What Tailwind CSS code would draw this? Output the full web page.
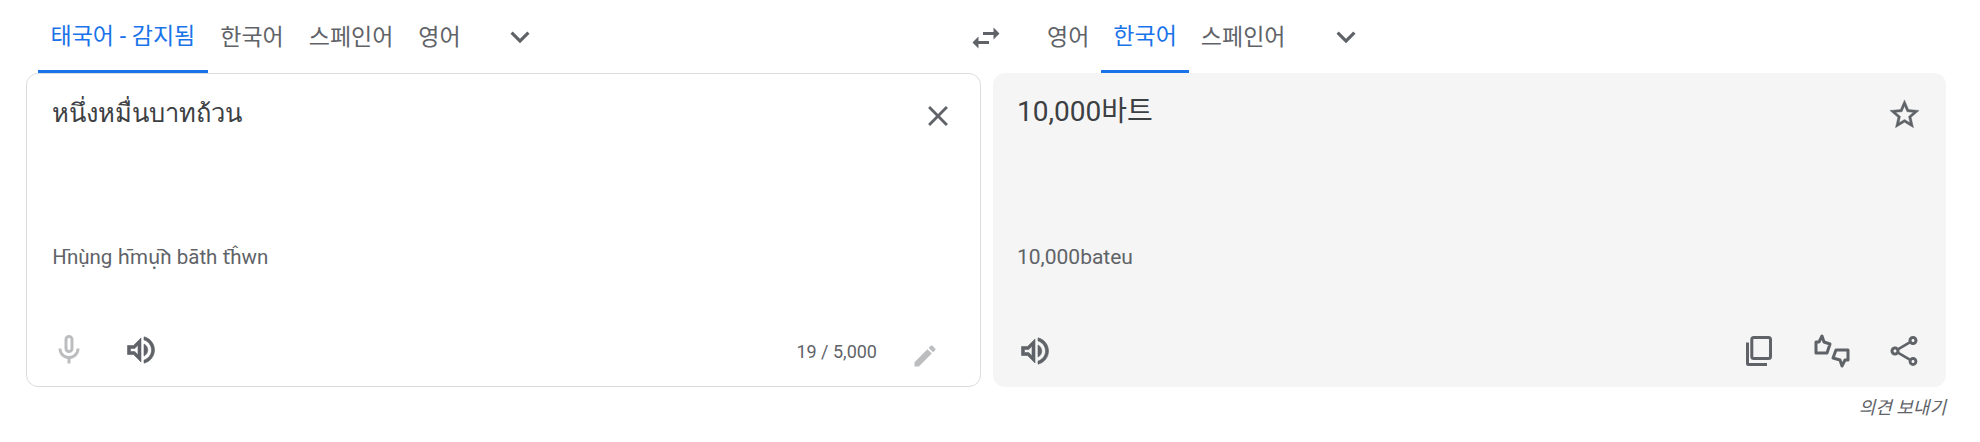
<!DOCTYPE html>
<html lang="ko"><head><meta charset="utf-8">
<script src="https://cdn.jsdelivr.net/npm/@tailwindcss/browser@4"></script></head>
<body class="bg-white w-[1980px] h-[442px] overflow-hidden font-['Roboto','Noto_Sans_CJK_KR','Noto_Sans',sans-serif] text-[#5f6368]">
<div class="flex h-[73px] pl-[38px] text-[23px] leading-[28px]">
  <div class="flex w-[926px] items-stretch">
    <div class="px-[12.5px] border-b-[3px] border-[#1a73e8] text-[#1a73e8] flex items-center whitespace-nowrap pt-[3px]">태국어 - 감지됨</div>
    <div class="px-[12.5px] flex items-center pt-[3px]">한국어</div>
    <div class="px-[12.5px] flex items-center pt-[3px]">스페인어</div>
    <div class="px-[12.5px] flex items-center pt-[3px]">영어</div>
    <div class="ml-[28px] flex items-center"><svg width="38" height="38" viewBox="0 0 24 24" fill="#5f6368"><path d="M7.41 8.59 12 13.17l4.59-4.58L18 10l-6 6-6-6z"/></svg></div>
  </div>
  <div class="w-[44px] flex items-center justify-center pt-[2px]"><svg width="36" height="36" viewBox="0 0 24 24" fill="#5f6368"><path d="M6.99 11 3 15l3.99 4v-3H14v-2H6.99v-3zM21 9l-3.99-4v3H10v2h7.01v3L21 9z"/></svg></div>
  <div class="flex items-stretch ml-[27px]">
    <div class="px-[12px] flex items-center pt-[3px]">영어</div>
    <div class="px-[12px] border-b-[3px] border-[#1a73e8] text-[#1a73e8] flex items-center pt-[3px]">한국어</div>
    <div class="px-[12px] flex items-center pt-[3px]">스페인어</div>
    <div class="ml-[30px] flex items-center"><svg width="38" height="38" viewBox="0 0 24 24" fill="#5f6368"><path d="M7.41 8.59 12 13.17l4.59-4.58L18 10l-6 6-6-6z"/></svg></div>
  </div>
</div>
<div class="flex pl-[26px] gap-[12px]">
  <div class="w-[955px] h-[314px] border border-[#dadce0] rounded-[12px] flex flex-col">
    <div class="flex justify-between pl-[25px] pr-[25px] pt-[20px] h-[160px]">
      <div class="text-[25.5px] leading-[36px] text-[#3c4043] font-['Noto_Sans','Liberation_Sans',sans-serif]">หนึ่งหมื่นบาทถ้วน</div>
      <svg width="34" height="34" viewBox="0 0 24 24" fill="#5f6368" class="mt-[5px]"><path d="M19 6.41 17.59 5 12 10.59 6.41 5 5 6.41 10.59 12 5 17.59 6.41 19 12 13.41 17.59 19 19 17.59 13.41 12z"/></svg>
    </div>
    <div class="pl-[25px] text-[20.5px] leading-[28px] mt-[9px] text-[#5f6368]">H̄nụ̀ng h̄mụ̄̀n bāth t̄ĥwn</div>
    <div class="flex items-center mt-auto h-[72px] pl-[24px] pr-[41px]">
      <svg width="36" height="36" viewBox="0 0 24 24" fill="#bcbdbf"><path d="M12 14c1.66 0 3-1.34 3-3V5c0-1.66-1.34-3-3-3S9 3.34 9 5v6c0 1.66 1.34 3 3 3zm-1-9c0-.55.45-1 1-1s1 .45 1 1v6c0 .55-.45 1-1 1s-1-.45-1-1V5zm6 6c0 2.76-2.24 5-5 5s-5-2.24-5-5H5c0 3.53 2.61 6.43 6 6.92V21h2v-3.08c3.39-.49 6-3.39 6-6.92h-2z"/></svg>
      <svg width="36" height="36" viewBox="0 0 24 24" fill="#5f6368" stroke="#5f6368" stroke-width="0.4" class="ml-[36px]"><path d="M3 9v6h4l5 5V4L7 9H3zm7-.17v6.34L7.83 13H5v-2h2.83L10 8.830zM16.500 12c0-1.770-1.020-3.290-2.500-4.030v8.050c1.480-.73 2.500-2.250 2.500-4.020zM14 3.230v2.060c2.890.86 5 3.540 5 6.710s-2.110 5.850-5 6.710v2.060c4.010-.91 7-4.490 7-8.770s-2.990-7.860-7-8.770z"/></svg>
      <div class="ml-auto text-[18px] leading-[24px] mr-[34px] mt-[4px]">19 / 5,000</div>
      <svg width="28" height="28" viewBox="0 0 24 24" fill="#bcbdbf" class="mt-[12px]"><path d="M3 17.25V21h3.750L17.810 9.940l-3.750-3.750L3 17.250zM20.710 7.040a1 1 0 0 0 0-1.410l-2.340-2.340a1 1 0 0 0-1.410 0l-1.830 1.830 3.750 3.750 1.830-1.830z"/></svg>
    </div>
  </div>
  <div class="w-[953px] h-[314px] bg-[#f5f5f5] rounded-[12px] flex flex-col">
    <div class="flex justify-between pl-[24px] pr-[24px] pt-[21px] h-[160px]">
      <div class="text-[28px] leading-[36px] text-[#3c4043]">10,000바트</div>
      <svg width="35" height="35" viewBox="0 0 24 24" fill="#5f6368" stroke="#5f6368" stroke-width="0.3" class="mt-[3px]"><path d="m22 9.240-7.190-.62L12 2 9.190 8.630 2 9.240l5.460 4.730L5.820 21 12 17.270 18.180 21l-1.630-7.030L22 9.240zM12 15.400l-3.760 2.270 1-4.280-3.320-2.880 4.380-.38L12 6.100l1.710 4.040 4.380.38-3.320 2.880 1 4.280L12 15.400z"/></svg>
    </div>
    <div class="pl-[24px] text-[21px] leading-[28px] mt-[10px] text-[#5f6368]">10,000bateu</div>
    <div class="flex items-center mt-auto h-[72px] pl-[24px] pr-[24px]">
      <svg width="36" height="36" viewBox="0 0 24 24" fill="#5f6368" stroke="#5f6368" stroke-width="0.4"><path d="M3 9v6h4l5 5V4L7 9H3zm7-.17v6.340L7.830 13H5v-2h2.830L10 8.830zM16.500 12c0-1.770-1.020-3.290-2.500-4.030v8.050c1.480-.73 2.500-2.250 2.500-4.020zM14 3.230v2.060c2.890.86 5 3.540 5 6.710s-2.110 5.850-5 6.710v2.060c4.010-.91 7-4.490 7-8.770s-2.990-7.860-7-8.770z"/></svg>
      <svg width="36" height="36" viewBox="0 0 36 36" fill="none" stroke="#5f6368" stroke-width="3" class="ml-auto"><rect x="10.800" y="4.500" width="18.700" height="21" rx="2"/><path d="M6.500 9.500v21a1 1 0 0 0 1 1H26"/></svg>
      <svg width="38" height="36" viewBox="0 0 38 36" fill="none" stroke="#5f6368" stroke-width="3" stroke-linejoin="round" class="ml-[36px]"><path d="M3 9h3l3-6 2 6 6 2-3 9H3z"/><path d="M35 27h-3l-3 6-2-6-7-2 3-8h12z"/></svg>
      <svg width="36" height="36" viewBox="0 0 24 24" fill="#5f6368" class="ml-[35px]"><path d="M18 16.080c-.76 0-1.440.3-1.960.77L8.910 12.700c.05-.23.090-.46.090-.7s-.04-.47-.09-.7l7.050-4.110c.54.5 1.250.81 2.040.81 1.660 0 3-1.340 3-3s-1.340-3-3-3-3 1.340-3 3c0 .24.040.47.090.7L8.040 9.810C7.500 9.310 6.790 9 6 9c-1.660 0-3 1.340-3 3s1.340 3 3 3c.79 0 1.500-.31 2.040-.81l7.120 4.160c-.05.21-.08.43-.08.65 0 1.610 1.310 2.920 2.920 2.920s2.920-1.310 2.920-2.920-1.310-2.920-2.920-2.920zM18 4c.55 0 1 .45 1 1s-.45 1-1 1-1-.45-1-1 .45-1 1-1zM6 13c-.55 0-1-.45-1-1s.45-1 1-1 1 .45 1 1-.45 1-1 1zm12 7.020c-.55 0-1-.45-1-1s.45-1 1-1 1 .45 1 1-.45 1-1 1z"/></svg>
    </div>
  </div>
</div>
<div class="flex justify-end pr-[34px] mt-[11px] text-[18px] leading-[20px] italic">의견 보내기</div>
</body></html>
